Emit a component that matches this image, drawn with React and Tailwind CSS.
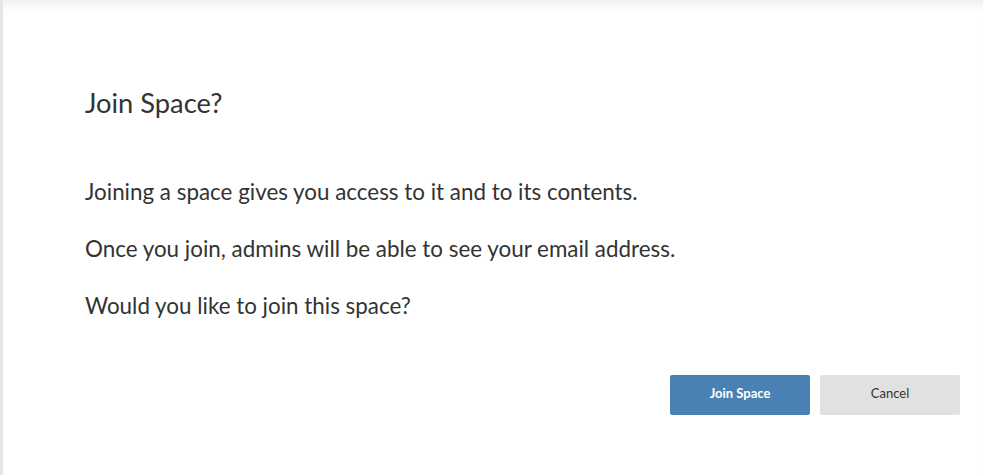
export default function App() {
  return (
    <div
      className="relative h-[475px] w-full overflow-hidden bg-white border-l-[3px] border-[#e6e6e6] shadow-[inset_0_10px_14px_-8px_rgba(0,0,0,0.09)]"
      style={{ fontFamily: 'Lato, "Open Sans", sans-serif' }}
    >
      <div className="flex flex-col pl-[82px] pr-[23px]">
        {/* Title */}
        <h1 className="mt-[87px] text-[27.3px] leading-[32px] font-normal text-[#333333]">
          Join Space?
        </h1>

        {/* Body */}
        <div className="mt-[58px] flex flex-col gap-[27px] text-[22.4px] leading-[30px] text-[#333333]">
          <p>Joining a space gives you access to it and to its contents.</p>
          <p>Once you join, admins will be able to see your email address.</p>
          <p>Would you like to join this space?</p>
        </div>

        {/* Actions */}
        <div className="mt-[54px] flex justify-end gap-[10px]">
          <button className="h-[40px] w-[140px] rounded-[2px] bg-[#4a81b5] pb-[2px] text-[13px] font-bold text-white">
            Join Space
          </button>
          <button className="h-[40px] w-[140px] rounded-[2px] bg-[#e1e1e1] pb-[2px] text-[13px] text-[#333333]">
            Cancel
          </button>
        </div>
      </div>
    </div>
  );
}
